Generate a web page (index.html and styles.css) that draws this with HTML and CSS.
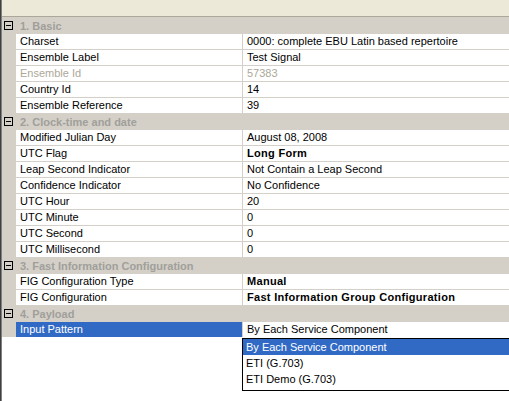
FILE: index.html
```html
<!DOCTYPE html>
<html>
<head>
<meta charset="utf-8">
<link rel="stylesheet" href="styles.css">
</head>
<body>
<div class="frame">
  <div class="panel">
    <div class="topbar"></div>

    <div class="cat"><span class="toggle"></span><span class="cat-label">1. Basic</span></div>
    <div class="row"><div class="gutter"></div><div class="name">Charset</div><div class="value">0000: complete EBU Latin based repertoire</div></div>
    <div class="row"><div class="gutter"></div><div class="name">Ensemble Label</div><div class="value">Test Signal</div></div>
    <div class="row disabled"><div class="gutter"></div><div class="name">Ensemble Id</div><div class="value">57383</div></div>
    <div class="row"><div class="gutter"></div><div class="name">Country Id</div><div class="value">14</div></div>
    <div class="row"><div class="gutter"></div><div class="name">Ensemble Reference</div><div class="value">39</div></div>

    <div class="cat"><span class="toggle"></span><span class="cat-label">2. Clock-time and date</span></div>
    <div class="row"><div class="gutter"></div><div class="name">Modified Julian Day</div><div class="value">August 08, 2008</div></div>
    <div class="row"><div class="gutter"></div><div class="name">UTC Flag</div><div class="value bold">Long Form</div></div>
    <div class="row"><div class="gutter"></div><div class="name">Leap Second Indicator</div><div class="value">Not Contain a Leap Second</div></div>
    <div class="row"><div class="gutter"></div><div class="name">Confidence Indicator</div><div class="value">No Confidence</div></div>
    <div class="row"><div class="gutter"></div><div class="name">UTC Hour</div><div class="value">20</div></div>
    <div class="row"><div class="gutter"></div><div class="name">UTC Minute</div><div class="value">0</div></div>
    <div class="row"><div class="gutter"></div><div class="name">UTC Second</div><div class="value">0</div></div>
    <div class="row"><div class="gutter"></div><div class="name">UTC Millisecond</div><div class="value">0</div></div>

    <div class="cat"><span class="toggle"></span><span class="cat-label">3. Fast Information Configuration</span></div>
    <div class="row"><div class="gutter"></div><div class="name">FIG Configuration Type</div><div class="value bold">Manual</div></div>
    <div class="row"><div class="gutter"></div><div class="name">FIG Configuration</div><div class="value bold">Fast Information Group Configuration</div></div>

    <div class="cat"><span class="toggle"></span><span class="cat-label">4. Payload</span></div>
    <div class="row selected"><div class="gutter"></div><div class="name">Input Pattern</div><div class="value">By Each Service Component
      <div class="dropdown">
        <div class="item active">By Each Service Component</div>
        <div class="item">ETI (G.703)</div>
        <div class="item">ETI Demo (G.703)</div>
      </div>
    </div></div>

    <div class="filler"></div>
  </div>
</div>
</body>
</html>
```

FILE: styles.css
```css
html, body {
  margin: 0;
  padding: 0;
  width: 509px;
  height: 401px;
  overflow: hidden;
  background: #ffffff;
}

.frame {
  height: 401px;
  border-left: 1px solid #404040;
  font-family: "Liberation Sans", Arial, sans-serif;
  font-size: 11px;
  color: #000000;
}

.panel {
  height: 401px;
  border-left: 1px solid #808080;
  display: flex;
  flex-direction: column;
  background: #ffffff;
}

.topbar {
  height: 16px;
  background: #ece9d8;
  border-bottom: 1px solid #aca899;
  flex: none;
}

.cat {
  height: 16px;
  flex: none;
  background: #d4d0c8;
  display: flex;
  align-items: center;
}

.toggle {
  width: 7px;
  height: 7px;
  border: 1px solid #000000;
  margin-left: 2px;
  margin-right: 7px;
  position: relative;
  flex: none;
}

.toggle::after {
  content: "";
  position: absolute;
  left: 1px;
  top: 3px;
  width: 5px;
  height: 1px;
  background: #000000;
}

.cat-label {
  font-weight: bold;
  color: #a09f9b;
  line-height: 16px;
  padding-top: 1px;
}

.row {
  flex: none;
  height: 15px;
  border-top: 1px solid #d4d0c8;
  display: grid;
  grid-template-columns: 14px 226px 1px 1fr;
  line-height: 15px;
}

.row .gutter {
  background: #d4d0c8;
}

.row .name {
  background: #ffffff;
  padding-left: 4px;
  white-space: nowrap;
  overflow: hidden;
  border-right: 1px solid #d4d0c8;
  grid-column: 2 / 4;
}

.row .value {
  background: #ffffff;
  padding-left: 4px;
  white-space: nowrap;
  position: relative;
}

.row .value.bold {
  font-weight: bold;
  letter-spacing: 0.3px;
}

.row.disabled .name,
.row.disabled .value {
  color: #aca899;
}

.row.selected .name {
  background: #316ac5;
  color: #ffffff;
}

.dropdown {
  position: absolute;
  left: -1px;
  top: 16px;
  width: 280px;
  height: 51px;
  border: 1px solid #000000;
  background: #ffffff;
  z-index: 2;
}

.dropdown .item {
  height: 16px;
  line-height: 16px;
  padding-left: 3px;
  color: #000000;
}

.dropdown .item.active {
  background: #316ac5;
  color: #ffffff;
}

.filler {
  flex: 1;
  background: #ffffff;
}
```
